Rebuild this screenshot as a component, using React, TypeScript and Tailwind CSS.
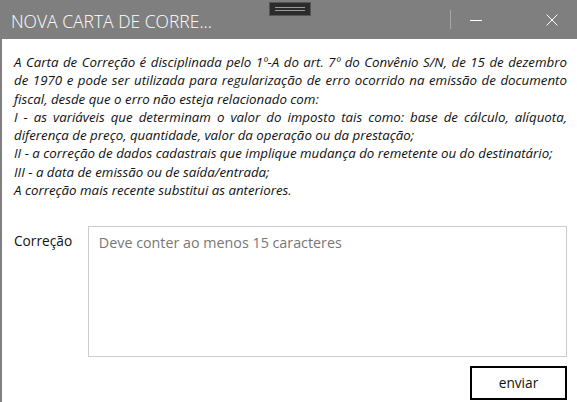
import React from "react";

export default function App() {
  const body = { fontFamily: "'Open Sans', 'Noto Sans', sans-serif" };
  return (
    <div className="w-[577px] h-[402px] bg-white overflow-hidden relative flex flex-col" style={body}>
      <div className="h-[39px] bg-[#7f7f7f] flex items-center shrink-0 relative">
        <div className="pl-[11px] pt-[4px] text-white text-[17.5px] font-light leading-none">NOVA CARTA DE CORRE...</div>
        <div className="absolute left-[269px] top-[2px] w-[42px] h-[14px] bg-[#2b2b2b] border border-[#555] flex flex-col items-center justify-center gap-[2px]">
          <div className="w-[30px] h-[1px] bg-[#9a9a9a]" />
          <div className="w-[30px] h-[1px] bg-[#9a9a9a]" />
        </div>
        <div className="ml-auto flex items-center h-full">
          <div className="w-[1px] h-[19px] bg-[#a8a8a8]" />
          <div className="w-[48px] flex justify-center ml-[1px]">
            <div className="w-[12px] h-[1px] bg-white mt-[1px]" />
          </div>
          <div className="w-[46px]" />
          <svg width="12" height="12" viewBox="0 0 12 12" className="mr-[19px]">
            <path d="M0.5 0.5 L11.5 11.5 M11.5 0.5 L0.5 11.5" stroke="white" strokeWidth="1" />
          </svg>
        </div>
      </div>
      <div className="flex-1 border-l-2 border-[#7f7f7f] pl-[12px] pr-[10px] pt-[14px]">
        <div className="italic text-[13.3px] leading-[18.3px] text-[#111]">
          <p className="text-justify">
            A Carta de Correção é disciplinada pelo 1º-A do art. 7º do Convênio S/N, de 15 de dezembro de 1970 e pode ser utilizada para regularização de erro ocorrido na emissão de documento fiscal, desde que o erro não esteja relacionado com:
          </p>
          <p className="text-justify">
            I - as variáveis que determinam o valor do imposto tais como: base de cálculo, alíquota, diferença de preço, quantidade, valor da operação ou da prestação;
          </p>
          <p>II - a correção de dados cadastrais que implique mudança do remetente ou do destinatário;</p>
          <p>III - a data de emissão ou de saída/entrada;</p>
          <p>A correção mais recente substitui as anteriores.</p>
        </div>
        <div className="flex mt-[27px]">
          <div className="w-[74px] text-[13.7px] text-[#111] pt-[5px]">Correção</div>
          <div className="w-[480px] h-[131px] border border-[#cccccc] px-[10px] pt-[5px] text-[14.3px] text-[#777]">
            Deve conter ao menos 15 caracteres
          </div>
        </div>
        <div className="flex justify-end mt-[9px] pr-[0px]">
          <button className="w-[97px] h-[34px] border-2 border-black text-[13.7px] text-[#111] bg-white">enviar</button>
        </div>
      </div>
    </div>
  );
}
